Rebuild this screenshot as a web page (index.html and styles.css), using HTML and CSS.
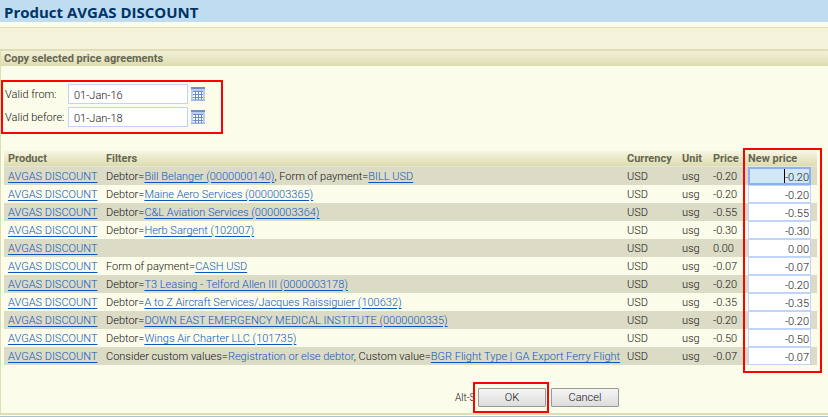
FILE: index.html
```html
<!DOCTYPE html>
<html lang="en">
<head>
    <meta charset="UTF-8">
    <meta name="viewport" content="width=device-width, initial-scale=1.0">
    <title>Product AVGAS DISCOUNT</title>
    <link rel="stylesheet" href="styles.css">
</head>
<body>
    <svg width="0" height="0" class="sprite" aria-hidden="true">
        <symbol id="calendar" viewBox="0 0 14 14">
            <rect width="14" height="14" fill="#b9cdee"/>
            <rect width="14" height="2" fill="#6f8fc9"/>
            <rect x="2" y="4" width="10" height="8" fill="#fff"/>
            <path d="M2 4.5h10M2 7.5h10M2 10.5h10M4.5 4v9M7.5 4v9M10.5 4v9" stroke="#6b8cc8" fill="none"/>
            <path d="M0 13.5h14" stroke="#9db5dd"/>
        </symbol>
    </svg>

    <header class="page-title">
        <h1>Product AVGAS DISCOUNT</h1>
    </header>
    <div class="toolbar"></div>

    <form class="panel">
        <h2>Copy selected price agreements</h2>

        <div class="dates highlight">
            <label for="validFrom">Valid from:</label>
            <input type="text" id="validFrom" value="01-Jan-16">
            <button type="button" class="picker" aria-label="Pick valid from date"><svg><use href="#calendar"/></svg></button>
            <label for="validBefore">Valid before:</label>
            <input type="text" id="validBefore" value="01-Jan-18">
            <button type="button" class="picker" aria-label="Pick valid before date"><svg><use href="#calendar"/></svg></button>
        </div>

        <div class="prices">
            <table>
                <thead>
                    <tr>
                        <th class="product">Product</th>
                        <th>Filters</th>
                        <th class="currency">Currency</th>
                        <th class="unit">Unit</th>
                        <th class="price">Price</th>
                        <th class="new-price">New price</th>
                    </tr>
                </thead>
                <tbody>
                    <tr>
                        <td><a href="#">AVGAS DISCOUNT</a></td>
                        <td>Debtor=<a href="#">Bill Belanger (0000000140)</a>, Form of payment=<a href="#">BILL USD</a></td>
                        <td>USD</td><td>usg</td><td>-0.20</td>
                        <td><div class="focused"><input type="text" aria-label="New price" value="-0.20"></div></td>
                    </tr>
                    <tr>
                        <td><a href="#">AVGAS DISCOUNT</a></td>
                        <td>Debtor=<a href="#">Maine Aero Services (0000003365)</a></td>
                        <td>USD</td><td>usg</td><td>-0.20</td>
                        <td><input type="text" aria-label="New price" value="-0.20"></td>
                    </tr>
                    <tr>
                        <td><a href="#">AVGAS DISCOUNT</a></td>
                        <td>Debtor=<a href="#">C&amp;L Aviation Services (0000003364)</a></td>
                        <td>USD</td><td>usg</td><td>-0.55</td>
                        <td><input type="text" aria-label="New price" value="-0.55"></td>
                    </tr>
                    <tr>
                        <td><a href="#">AVGAS DISCOUNT</a></td>
                        <td>Debtor=<a href="#">Herb Sargent (102007)</a></td>
                        <td>USD</td><td>usg</td><td>-0.30</td>
                        <td><input type="text" aria-label="New price" value="-0.30"></td>
                    </tr>
                    <tr>
                        <td><a href="#">AVGAS DISCOUNT</a></td>
                        <td></td>
                        <td>USD</td><td>usg</td><td>0.00</td>
                        <td><input type="text" aria-label="New price" value="0.00"></td>
                    </tr>
                    <tr>
                        <td><a href="#">AVGAS DISCOUNT</a></td>
                        <td>Form of payment=<a href="#">CASH USD</a></td>
                        <td>USD</td><td>usg</td><td>-0.07</td>
                        <td><input type="text" aria-label="New price" value="-0.07"></td>
                    </tr>
                    <tr>
                        <td><a href="#">AVGAS DISCOUNT</a></td>
                        <td>Debtor=<a href="#">T3 Leasing - Telford Allen III (0000003178)</a></td>
                        <td>USD</td><td>usg</td><td>-0.20</td>
                        <td><input type="text" aria-label="New price" value="-0.20"></td>
                    </tr>
                    <tr>
                        <td><a href="#">AVGAS DISCOUNT</a></td>
                        <td>Debtor=<a href="#">A to Z Aircraft Services/Jacques Raissiguier (100632)</a></td>
                        <td>USD</td><td>usg</td><td>-0.35</td>
                        <td><input type="text" aria-label="New price" value="-0.35"></td>
                    </tr>
                    <tr>
                        <td><a href="#">AVGAS DISCOUNT</a></td>
                        <td>Debtor=<a href="#">DOWN EAST EMERGENCY MEDICAL INSTITUTE (0000000335)</a></td>
                        <td>USD</td><td>usg</td><td>-0.20</td>
                        <td><input type="text" aria-label="New price" value="-0.20"></td>
                    </tr>
                    <tr>
                        <td><a href="#">AVGAS DISCOUNT</a></td>
                        <td>Debtor=<a href="#">Wings Air Charter LLC (101735)</a></td>
                        <td>USD</td><td>usg</td><td>-0.50</td>
                        <td><input type="text" aria-label="New price" value="-0.50"></td>
                    </tr>
                    <tr>
                        <td><a href="#">AVGAS DISCOUNT</a></td>
                        <td>Consider custom values=<a href="#" class="plain">Registration or else debtor</a>, Custom value=<a href="#">BGR Flight Type | GA Export Ferry Flight</a></td>
                        <td>USD</td><td>usg</td><td>-0.07</td>
                        <td><input type="text" aria-label="New price" value="-0.07"></td>
                    </tr>
                </tbody>
            </table>
            <div class="column-mark"></div>
        </div>

        <div class="actions">
            <span class="shortcut">Alt-S</span>
            <div class="ok highlight"><button type="submit">OK</button></div>
            <button type="button">Cancel</button>
        </div>
    </form>
    <div class="page-end"></div>
</body>
</html>
```

FILE: styles.css
```css
* {
    box-sizing: border-box;
}

body {
    margin: 0;
    background-color: #fcfcea;
    color: #111;
    font-family: Roboto, "Segoe UI", sans-serif;
    font-size: 11px;
    font-weight: 300;
    line-height: 16px;
}

h1, h2 {
    margin: 0;
}

input, button {
    font: inherit;
    color: inherit;
}

a {
    color: #0a58c4;
    text-underline-offset: 2px;
}

a.plain {
    text-decoration: none;
}

.sprite {
    position: absolute;
}

.page-title {
    background-color: #bfdcf0;
    padding: 2px 4px 0;
    margin-bottom: 5px;
}

.page-title h1 {
    color: #003366;
    font-family: "Open Sans", "Segoe UI", sans-serif;
    font-size: 15px;
    line-height: 20px;
}

.toolbar {
    height: 22px;
    border-top: 1px solid #dedeb8;
    background-color: #f4f3da;
}

.panel {
    border: solid #dedeb2;
    border-width: 2px 0 2px 1px;
}

.panel h2 {
    padding: 1px 3px 0;
    color: #666650;
    font-size: 11px;
    line-height: 14px;
    background: linear-gradient(#f2f1da, #dddcae);
}

/* red frames around the parts to fill in */
.highlight {
    border: 2px solid #f00;
}

.dates {
    display: grid;
    grid-template-columns: 60px 120px 16px;
    gap: 3px;
    align-items: center;
    width: 222px;
    margin-top: 14px;
    padding: 2px 2px 5px;
}

.dates label {
    padding-top: 2px;
    white-space: nowrap;
}

.dates input {
    height: 20px;
    padding: 2px 5px 0;
    border: 1px solid #c0d4fa;
    background-color: #fff;
}

.picker {
    display: flex;
    padding: 0;
    border: none;
    background: none;
}

.picker svg {
    width: 14px;
    height: 14px;
}

.prices {
    position: relative;
    margin: 17px 11px 0 3px;
}

table {
    width: 100%;
    table-layout: fixed;
    border-collapse: collapse;
}

th, td {
    height: 18px;
    padding: 2px 0 0 4px;
    text-align: left;
    white-space: nowrap;
}

th {
    height: 16px;
    padding-top: 0;
    color: #666650;
}

td:last-child {
    padding-top: 0;
}

thead tr {
    background: linear-gradient(#f6f5e2, #dddcae 15px, #e4e4e0 15px);
}

tbody tr:nth-child(odd) {
    background-color: #dcdbc6;
}

.product {
    width: 98px;
}

.currency {
    width: 55px;
}

.unit {
    width: 31px;
}

.price {
    width: 35px;
}

.new-price {
    width: 73px;
}

td input {
    display: block;
    width: 63px;
    height: 18px;
    padding: 2px 1px 0;
    border: 1px solid #c0d4fa;
    background-color: #fff;
    text-align: right;
}

.focused {
    position: relative;
    width: 63px;
}

.focused input {
    border: 2px solid #8cb0f0;
    padding: 2px 0 0;
    background-color: #d3e8f6;
}

/* text caret */
.focused::after {
    content: "";
    position: absolute;
    top: 2px;
    left: 36px;
    width: 1px;
    height: 14px;
    background-color: #000;
}

.column-mark {
    position: absolute;
    top: -3px;
    right: -5px;
    bottom: -8px;
    width: 79px;
    border: 2px solid #f00;
    pointer-events: none;
}

.actions {
    display: flex;
    justify-content: flex-end;
    align-items: center;
    margin: 17px 209px 0 0;
}

.actions button {
    width: 68px;
    height: 19px;
    padding: 0;
    border: 1px solid #999;
    border-radius: 1px;
    background: linear-gradient(#f6f6f6, #dcdcdc);
}

/* the key hint runs in under the OK frame */
.shortcut {
    width: 18px;
    white-space: nowrap;
    font-size: 10px;
}

.ok {
    position: relative;
    margin-right: 2px;
    padding: 4px 1px 4px 3px;
    background-color: #fcfcea;
}

.ok button {
    display: block;
}

.page-end {
    height: 2px;
    border-bottom: 1px solid #a9c3d0;
}
```
